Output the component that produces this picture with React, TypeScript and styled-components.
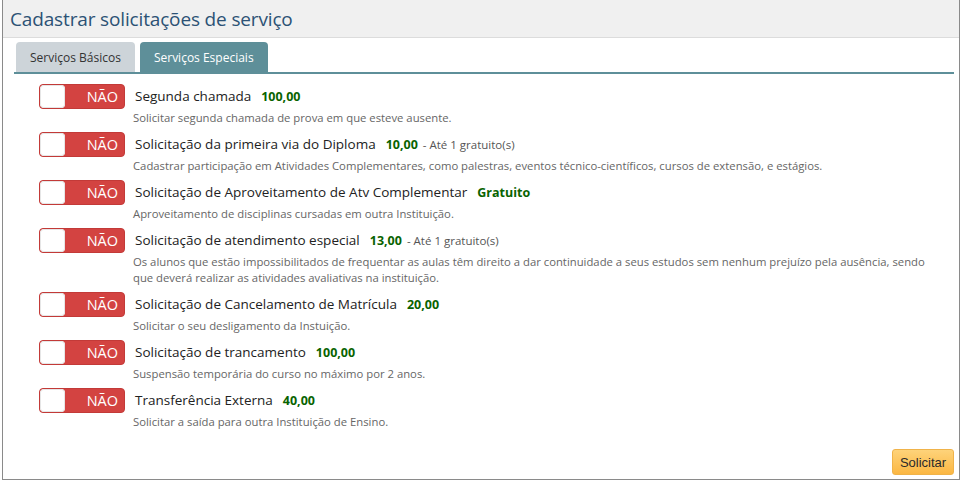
import { FC } from "react";
import styled, { createGlobalStyle } from "styled-components";

const GlobalStyle = createGlobalStyle`
  html, body {
    margin: 0;
    padding: 0;
    background: #fff;
  }
  body {
    font-family: "Open Sans", "Noto Sans", sans-serif;
  }
`;

interface Service {
  title: string;
  price: string;
  note?: string;
  description: string;
}

const services: Service[] = [
  {
    title: "Segunda chamada",
    price: "100,00",
    description: "Solicitar segunda chamada de prova em que esteve ausente.",
  },
  {
    title: "Solicitação da primeira via do Diploma",
    price: "10,00",
    note: "- Até 1 gratuito(s)",
    description:
      "Cadastrar participação em Atividades Complementares, como palestras, eventos técnico-científicos, cursos de extensão, e estágios.",
  },
  {
    title: "Solicitação de Aproveitamento de Atv Complementar",
    price: "Gratuito",
    description: "Aproveitamento de disciplinas cursadas em outra Instituição.",
  },
  {
    title: "Solicitação de atendimento especial",
    price: "13,00",
    note: "- Até 1 gratuito(s)",
    description:
      "Os alunos que estão impossibilitados de frequentar as aulas têm direito a dar continuidade a seus estudos sem nenhum prejuízo pela ausência, sendo que deverá realizar as atividades avaliativas na instituição.",
  },
  {
    title: "Solicitação de Cancelamento de Matrícula",
    price: "20,00",
    description: "Solicitar o seu desligamento da Instuição.",
  },
  {
    title: "Solicitação de trancamento",
    price: "100,00",
    description: "Suspensão temporária do curso no máximo por 2 anos.",
  },
  {
    title: "Transferência Externa",
    price: "40,00",
    description: "Solicitar a saída para outra Instituição de Ensino.",
  },
];

const Toggle: FC = () => (
  <Switch>
    <Knob />
    <SwitchLabel>NÃO</SwitchLabel>
  </Switch>
);

export default function App() {
  return (
    <>
      <GlobalStyle />
      <Panel>
        <Header>
          <Title>Cadastrar solicitações de serviço</Title>
        </Header>
        <Body>
          <Tabs>
            <Tab>Serviços Básicos</Tab>
            <Tab $active>Serviços Especiais</Tab>
          </Tabs>
          <List>
            {services.map((s) => (
              <Row key={s.title}>
                <Toggle />
                <Info>
                  <Line>
                    <Name>{s.title}</Name>
                    <Price>{s.price}</Price>
                    {s.note && <Note>{s.note}</Note>}
                  </Line>
                  <Description>{s.description}</Description>
                </Info>
              </Row>
            ))}
          </List>
          <Footer>
            <SubmitButton>Solicitar</SubmitButton>
          </Footer>
        </Body>
      </Panel>
    </>
  );
}

const Panel = styled.div`
  margin-left: 2px;
  width: 956px;
  height: 479px;
  border: 1px solid #8a8a8a;
  border-top: none;
  display: flex;
  flex-direction: column;
`;

const Header = styled.div`
  height: 37px;
  background: #f0f0f0;
  border-bottom: 1px solid #dcdcdc;
  display: flex;
  align-items: center;
  padding-left: 7px;
`;

const Title = styled.h1`
  margin: 0;
  font-size: 19px;
  font-weight: 400;
  color: #2c5275;
  letter-spacing: -0.15px;
`;

const Body = styled.div`
  flex: 1;
  display: flex;
  flex-direction: column;
  padding: 4px 5px 0 11px;
`;

const Tabs = styled.div`
  display: flex;
  gap: 5px;
  padding-left: 2px;
  border-bottom: 2px solid #5e8f99;
`;

const Tab = styled.div<{ $active?: boolean }>`
  height: 30px;
  padding: 0 14px;
  display: flex;
  align-items: center;
  border-radius: 4px 4px 0 0;
  font-size: 12px;
  color: ${(p) => (p.$active ? "#fff" : "#333")};
  background: ${(p) => (p.$active ? "#5e8f99" : "#cdd4d9")};
`;

const List = styled.div`
  display: flex;
  flex-direction: column;
  gap: 6px;
  padding: 10px 0 0 25px;
`;

const Row = styled.div`
  display: flex;
  align-items: flex-start;
  gap: 8px;
`;

const Switch = styled.div`
  flex: none;
  width: 86px;
  height: 25px;
  box-sizing: border-box;
  border-radius: 4px;
  background: #d34341;
  border: 1px solid #c33a38;
  display: flex;
  align-items: center;
  justify-content: space-between;
  overflow: hidden;
`;

const Knob = styled.div`
  width: 25px;
  height: 23px;
  background: #fff;
  border-radius: 4px;
  box-shadow: inset 0 0 0 1px #e6e6e6;
`;

const SwitchLabel = styled.span`
  font-size: 14.5px;
  color: #fff;
  padding-right: 6px;
`;

const Info = styled.div`
  display: flex;
  flex-direction: column;
  padding-top: 3px;
`;

const Line = styled.div`
  display: flex;
  align-items: baseline;
  height: 19px;
  line-height: 19px;
  padding-left: 2px;
`;

const Name = styled.span`
  font-size: 13.5px;
  color: #222;
  margin-right: 10px;
`;

const Price = styled.span`
  font-size: 12.5px;
  font-weight: 700;
  color: #096300;
`;

const Note = styled.span`
  font-size: 11.5px;
  color: #555;
  margin-left: 5px;
`;

const Description = styled.div`
  margin-top: 4px;
  font-size: 11.3px;
  line-height: 16px;
  color: #666;
  max-width: 800px;
`;

const Footer = styled.div`
  margin-top: auto;
  display: flex;
  justify-content: flex-end;
  padding-bottom: 4px;
`;

const SubmitButton = styled.button`
  width: 62px;
  height: 26px;
  border: 1px solid #f0b34a;
  border-radius: 3px;
  background: linear-gradient(#fed37a, #fbb743);
  color: #2a2a2a;
  font-family: "Liberation Sans", Arial, sans-serif;
  font-size: 13px;
  padding: 0;
`;
